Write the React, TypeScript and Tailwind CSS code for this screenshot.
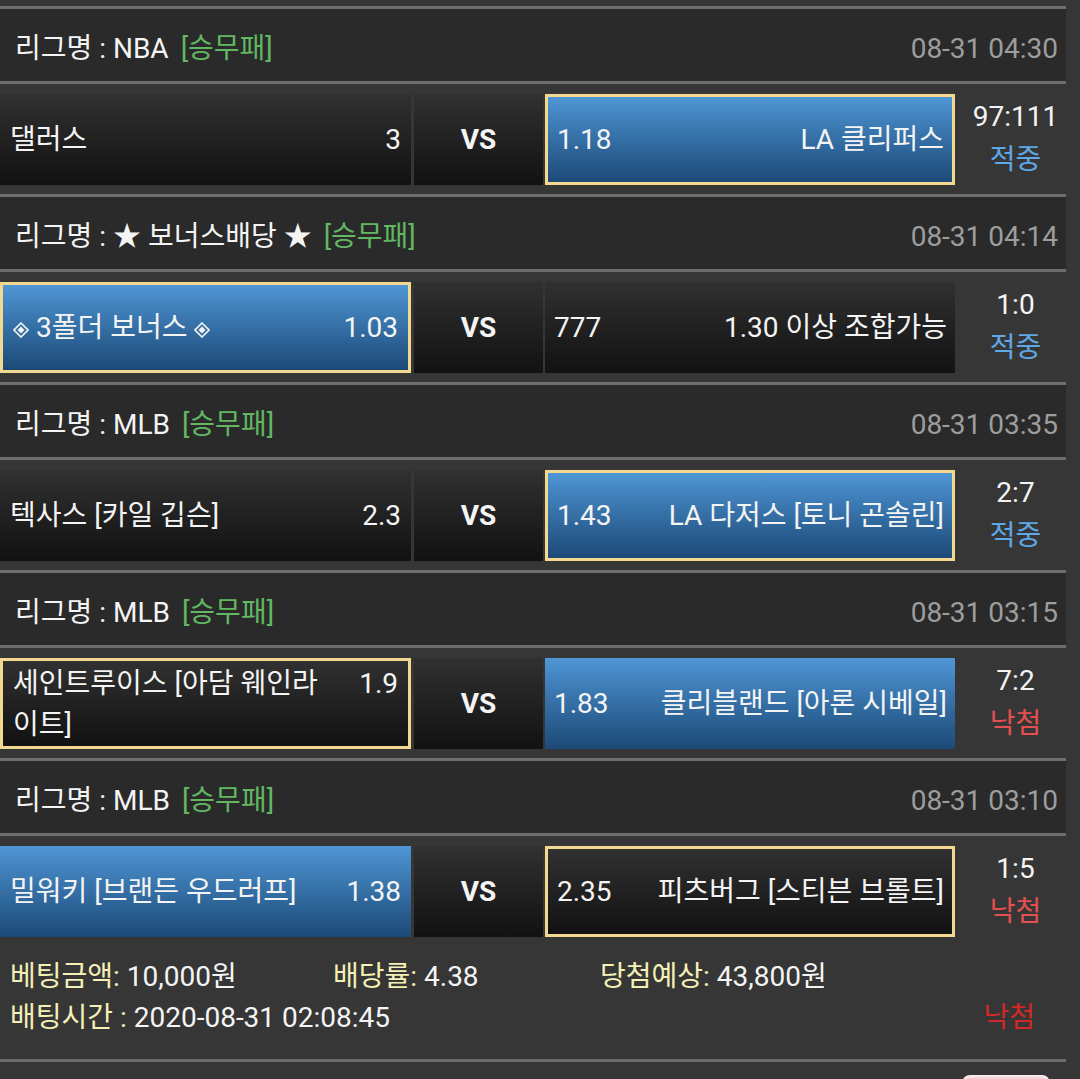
import React from "react";

type Side = {
  name: string;
  odds: string;
  picked?: boolean; // blue
  boxed?: boolean; // yellow border
};

type Game = {
  league: string;
  time: string;
  home: Side;
  away: Side;
  score: string;
  result: "win" | "lose";
};

const games: Game[] = [
  {
    league: "NBA",
    time: "08-31 04:30",
    home: { name: "댈러스", odds: "3" },
    away: { name: "LA 클리퍼스", odds: "1.18", picked: true, boxed: true },
    score: "97:111",
    result: "win",
  },
  {
    league: "★ 보너스배당 ★",
    time: "08-31 04:14",
    home: { name: "3폴더 보너스", odds: "1.03", picked: true, boxed: true },
    away: { name: "1.30 이상 조합가능", odds: "777" },
    score: "1:0",
    result: "win",
  },
  {
    league: "MLB",
    time: "08-31 03:35",
    home: { name: "텍사스 [카일 깁슨]", odds: "2.3" },
    away: { name: "LA 다저스 [토니 곤솔린]", odds: "1.43", picked: true, boxed: true },
    score: "2:7",
    result: "win",
  },
  {
    league: "MLB",
    time: "08-31 03:15",
    home: { name: "세인트루이스 [아담 웨인라이트]", odds: "1.9", boxed: true },
    away: { name: "클리블랜드 [아론 시베일]", odds: "1.83", picked: true },
    score: "7:2",
    result: "lose",
  },
  {
    league: "MLB",
    time: "08-31 03:10",
    home: { name: "밀워키 [브랜든 우드러프]", odds: "1.38", picked: true },
    away: { name: "피츠버그 [스티븐 브롤트]", odds: "2.35", boxed: true },
    score: "1:5",
    result: "lose",
  },
];

function cellBg(side: Side) {
  const bg = side.picked
    ? "bg-gradient-to-b from-[#4f96d6] to-[#1c4a77]"
    : "bg-gradient-to-b from-[#313131] to-[#121212]";
  const border = side.boxed ? "border-[3px] border-[#f3d88f]" : "";
  return `${bg} ${border}`;
}

// ◈ 모양 (외곽 마름모 + 안쪽 채운 마름모)
function Diamond() {
  return (
    <svg width="16" height="16" viewBox="0 0 16 16" className="inline-block align-[-1px]">
      <path d="M8 1 L15 8 L8 15 L1 8 Z" fill="none" stroke="#f4f4f4" strokeWidth="1.6" />
      <path d="M8 4.5 L11.5 8 L8 11.5 L4.5 8 Z" fill="#f4f4f4" />
    </svg>
  );
}

function TeamName({ name }: { name: string }) {
  if (name === "3폴더 보너스") {
    return (
      <>
        <Diamond /> {name} <Diamond />
      </>
    );
  }
  return <>{name}</>;
}

function HomeCell({ side }: { side: Side }) {
  return (
    <div className={`w-[411px] h-[91px] flex items-center px-[10px] ${cellBg(side)}`}>
      <div className="w-full leading-[41px]">
        <span className="float-right ml-[26px]">{side.odds}</span>
        <TeamName name={side.name} />
      </div>
    </div>
  );
}

function AwayCell({ side }: { side: Side }) {
  return (
    <div className={`w-[410px] h-[91px] flex items-center justify-between pl-[9px] pr-[8px] ${cellBg(side)}`}>
      <span>{side.odds}</span>
      <span>{side.name}</span>
    </div>
  );
}

function GameBlock({ game }: { game: Game }) {
  return (
    <div>
      <div className="h-[3px] bg-[#6d6d6d]" />
      <div className="h-[72px] bg-[#2a2a2a] flex items-center justify-between pl-[15px] pr-[8px] pt-[8px]">
        <div className="flex items-center">
          <span>리그명 : {game.league}</span>
          <span className="ml-[12px] text-[#62b862]">[승무패]</span>
        </div>
        <span className="text-[#9d9d9d]">{game.time}</span>
      </div>
      <div className="h-[3px] bg-[#6d6d6d]" />
      <div className="h-[110px] pt-[10px] flex">
        <HomeCell side={game.home} />
        <div className="w-[129px] h-[91px] ml-[3px] mr-[2px] flex items-center justify-center font-bold bg-gradient-to-b from-[#313131] to-[#121212]">
          VS
        </div>
        <AwayCell side={game.away} />
        <div className="w-[111px] h-[91px] pl-[10px] flex flex-col items-center justify-center leading-[43px] -mt-[2px]">
          <span>{game.score}</span>
          <span className={game.result === "win" ? "text-[#5fa8e8]" : "text-[#e45050]"}>
            {game.result === "win" ? "적중" : "낙첨"}
          </span>
        </div>
      </div>
    </div>
  );
}

export default function App() {
  return (
    <div
      className="min-h-[1079px] bg-[#363636] text-[#f4f4f4] text-[28px] pt-[6px] overflow-hidden"
      style={{ fontFamily: "Roboto, 'Noto Sans CJK KR', sans-serif" }}
    >
      <div className="w-[1066px]">
        {games.map((g, i) => (
          <GameBlock key={i} game={g} />
        ))}
        <div className="h-[113px] pt-[10px] px-[10px] leading-[41px]">
          <div className="flex">
            <div className="w-[323px]">
              <span className="text-[#f5f0b6]">베팅금액:</span> 10,000원
            </div>
            <div className="w-[267px]">
              <span className="text-[#f5f0b6]">배당률:</span> 4.38
            </div>
            <div>
              <span className="text-[#f5f0b6]">당첨예상:</span> 43,800원
            </div>
          </div>
          <div className="flex justify-between pr-[21px]">
            <div>
              <span className="text-[#f5f0b6]">배팅시간 :</span> 2020-08-31 02:08:45
            </div>
            <span className="text-[#d42828]">낙첨</span>
          </div>
        </div>
        <div className="h-[3px] bg-[#6d6d6d]" />
        <div className="flex justify-end pr-[16px] pt-[13px]">
          <div className="w-[88px] h-[10px] rounded-t-[8px] bg-[#f2d4dc] border-2 border-[#fbe9ee]" />
        </div>
      </div>
    </div>
  );
}
